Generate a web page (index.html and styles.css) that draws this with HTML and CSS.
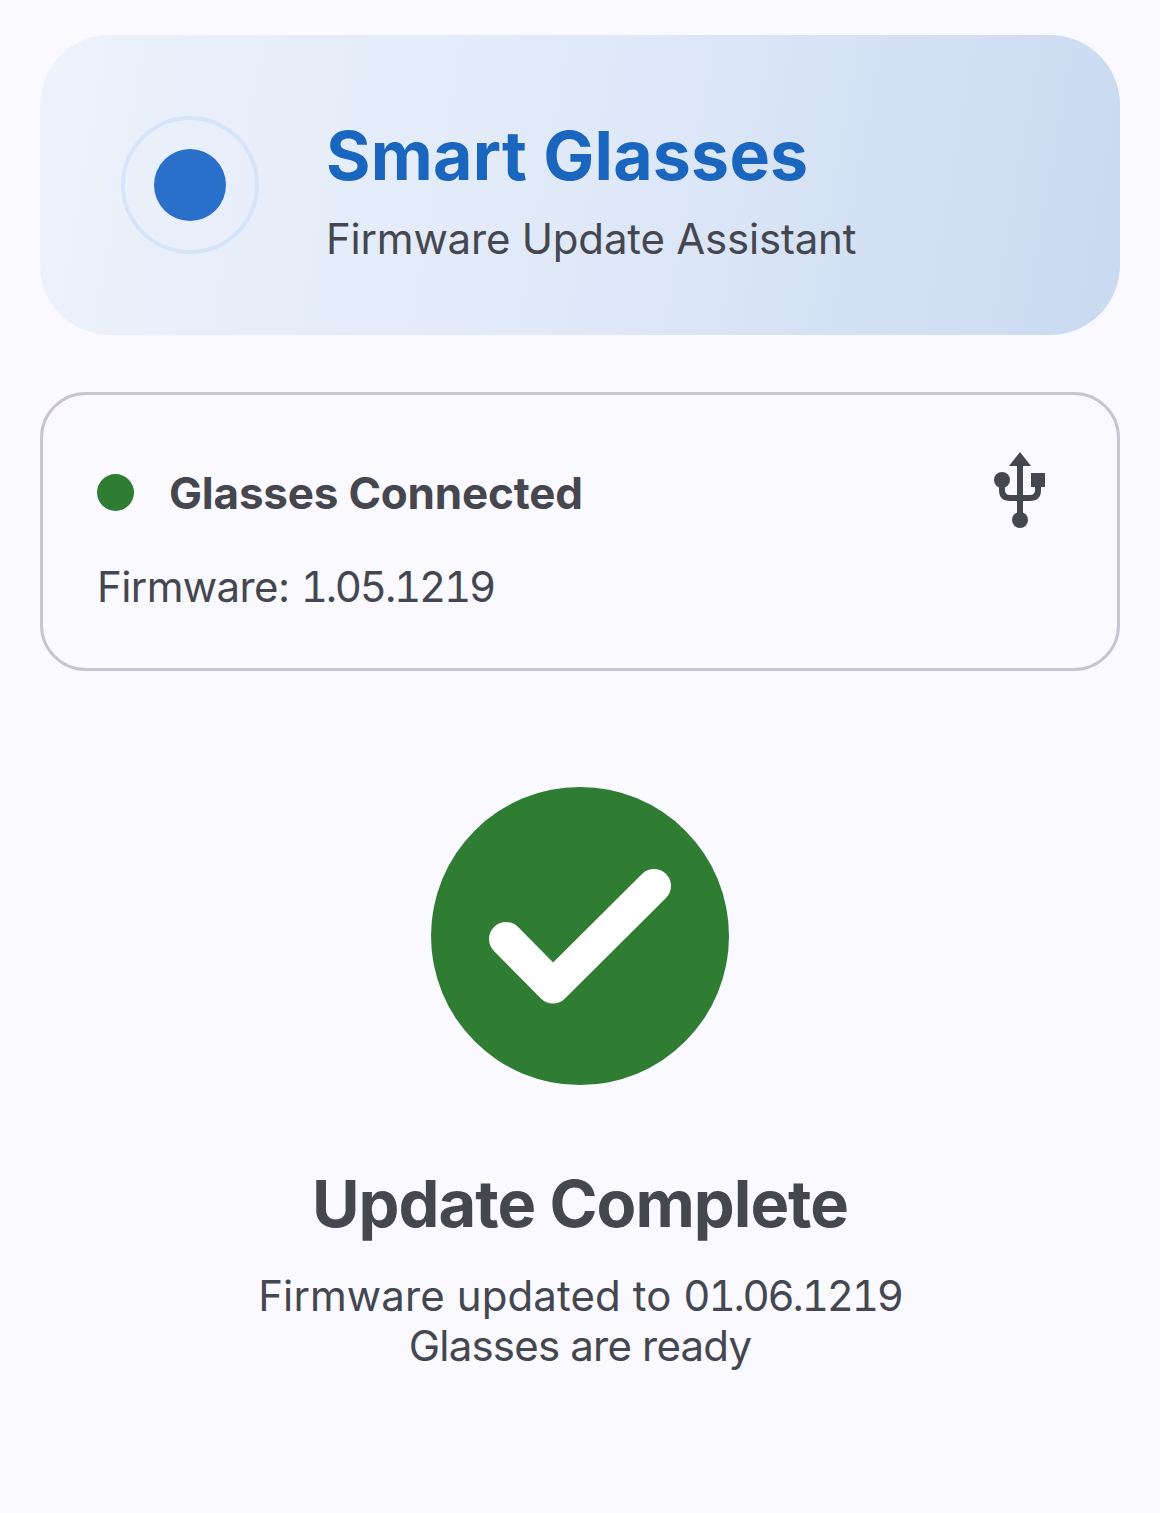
FILE: index.html
```html
<!DOCTYPE html>
<html lang="en">

<head>
    <title>Smart Glasses</title>
    <meta charset="UTF-8">
    <meta name="viewport" content="width=device-width, initial-scale=1">
    <link rel="stylesheet" href="styles.css">
</head>

<body>
    <div class="page">
        <header class="hero">
            <div class="ring">
                <div class="dot"></div>
            </div>
            <div class="hero-text">
                <h1 class="hero-title">Smart Glasses</h1>
                <p class="hero-sub">Firmware Update Assistant</p>
            </div>
        </header>

        <section class="device">
            <div class="device-info">
                <div class="device-status">
                    <span class="status-dot"></span>
                    <span class="status-label">Glasses Connected</span>
                </div>
                <p class="device-fw">Firmware: <span class="version">1.05.1219</span></p>
            </div>
            <svg class="usb" width="52" height="76" viewBox="0 0 52 76">
                <!-- arrow, stem, arms -->
                <path class="usb-fill" d="M26 0L37 14H15Z" />
                <path class="usb-line" d="M26 12V68M8 28V38Q8 46 16 46H36Q44 46 44 38V30" />
                <circle class="usb-fill" cx="8" cy="28" r="8" />
                <rect class="usb-fill" x="37" y="21" width="14" height="14" />
                <circle class="usb-fill" cx="26" cy="68" r="8" />
            </svg>
        </section>

        <section class="result">
            <svg class="check" width="298" height="298" viewBox="0 0 298 298">
                <circle cx="149" cy="149" r="149" fill="#2e7d32" />
                <path d="M75 152L122 199.500L223 99" fill="none" stroke="#fff" stroke-width="34" stroke-linecap="round" stroke-linejoin="round" />
            </svg>
            <h2 class="result-title">Update Complete</h2>
            <p class="result-text">Firmware updated to <span class="version">01.06.1219</span></p>
            <p class="result-note">Glasses are ready</p>
        </section>
    </div>
</body>

</html>
```

FILE: styles.css
```css
* {
    margin: 0;
    padding: 0;
    box-sizing: border-box;
}

body {
    background: #f9f9ff;
    font-family: Inter, Roboto, sans-serif;
    color: #46464f;
}

.page {
    display: flex;
    flex-direction: column;
    padding: 35px 40px 0;
    height: 1513px;
}

.hero {
    display: flex;
    align-items: center;
    gap: 67px;
    height: 300px;
    padding-left: 81px;
    border-radius: 70px;
    background: linear-gradient(100deg, #edf2fb 0%, #e0e9f8 50%, #c9daf1 100%);
}

.ring {
    display: flex;
    align-items: center;
    justify-content: center;
    width: 138px;
    height: 138px;
    border: 4px solid #d6e4f7;
    border-radius: 50%;
}

.dot {
    width: 72px;
    height: 72px;
    border-radius: 50%;
    background: #2a6fc9;
}

.hero-title {
    margin-top: 12px;
    font-size: 68px;
    line-height: 80px;
    font-weight: 700;
    letter-spacing: 0.2px;
    color: #1a66bf;
}

.hero-sub {
    margin-top: 16px;
    font-size: 42px;
    line-height: 56px;
    letter-spacing: -0.2px;
    color: #44474f;
}

.device {
    display: flex;
    justify-content: space-between;
    align-items: flex-start;
    height: 279px;
    margin-top: 57px;
    padding: 67px 71px 0 54px;
    border: 3px solid #cac4d0;
    border-radius: 46px;
}

.device-status {
    display: flex;
    align-items: center;
    gap: 35px;
    height: 60px;
}

.status-dot {
    width: 37px;
    height: 37px;
    border-radius: 50%;
    background: #2e7d32;
}

.status-label {
    padding-top: 2px;
    font-size: 44px;
    font-weight: 700;
    letter-spacing: -0.2px;
}

.device-fw {
    margin-top: 40px;
    font-size: 42px;
    line-height: 50px;
    letter-spacing: -0.6px;
    color: #44474f;
}

.version {
    font-variant-numeric: tabular-nums;
    letter-spacing: -2.2px;
}

.usb {
    margin-top: -10px;
}

.usb-fill {
    fill: #46464f;
}

.usb-line {
    fill: none;
    stroke: #46464f;
    stroke-width: 6;
}

.result {
    display: flex;
    flex-direction: column;
    align-items: center;
    margin-top: 116px;
}

.result-title {
    margin-top: 74px;
    font-size: 65px;
    line-height: 90px;
    font-weight: 700;
    letter-spacing: -1px;
}

.result-text {
    margin-top: 22px;
    font-size: 42px;
    line-height: 50px;
    letter-spacing: 0.1px;
    color: #44474f;
}

.result-note {
    font-size: 42px;
    line-height: 50px;
    letter-spacing: -0.8px;
    color: #44474f;
}
```
